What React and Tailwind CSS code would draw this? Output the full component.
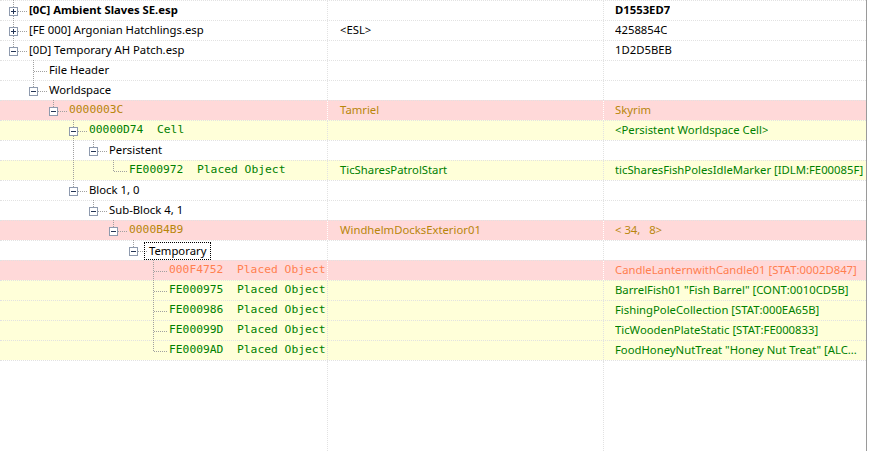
import React from 'react';

const GOLD = 'text-[#b8860b]';
const GREEN = 'text-[#008000]';
const CORAL = 'text-[#ff7f50]';

// g = guide lines for ancestor levels, last = last sibling, box = expander
const rows = [
  { g: [], last: false, box: 'plus', label: '[0C] Ambient Slaves SE.esp', c3: 'D1553ED7', bold: true },
  { g: [], last: false, box: 'plus', label: '[FE 000] Argonian Hatchlings.esp', c2: '<ESL>', c3: '4258854C' },
  { g: [], last: true, box: 'minus', label: '[0D] Temporary AH Patch.esp', c3: '1D2D5BEB' },
  { g: [0], last: false, label: 'File Header' },
  { g: [0], last: true, box: 'minus', label: 'Worldspace' },
  { g: [0, 0], last: true, box: 'minus', label: '0000003C', mono: true, c2: 'Tamriel', c3: 'Skyrim', bg: 'pink', color: GOLD },
  { g: [0, 0, 0], last: false, box: 'minus', label: '00000D74  Cell', mono: true, c3: '<Persistent Worldspace Cell>', bg: 'yellow', color: GREEN },
  { g: [0, 0, 0, 1], last: true, box: 'minus', label: 'Persistent' },
  { g: [0, 0, 0, 1, 0], last: true, label: 'FE000972  Placed Object', mono: true, c2: 'TicSharesPatrolStart', c3: 'ticSharesFishPolesIdleMarker [IDLM:FE00085F]', bg: 'yellow', color: GREEN },
  { g: [0, 0, 0], last: true, box: 'minus', label: 'Block 1, 0' },
  { g: [0, 0, 0, 0], last: true, box: 'minus', label: 'Sub-Block 4, 1' },
  { g: [0, 0, 0, 0, 0], last: true, box: 'minus', label: '0000B4B9', mono: true, c2: 'WindhelmDocksExterior01', c3: '< 34,   8>', bg: 'pink', color: GOLD },
  { g: [0, 0, 0, 0, 0, 0], last: true, box: 'minus', label: 'Temporary', focus: true },
  { g: [0, 0, 0, 0, 0, 0, 0], last: false, label: '000F4752  Placed Object', mono: true, c3: 'CandleLanternwithCandle01 [STAT:0002D847]', bg: 'pink', color: CORAL },
  { g: [0, 0, 0, 0, 0, 0, 0], last: false, label: 'FE000975  Placed Object', mono: true, c3: 'BarrelFish01 "Fish Barrel" [CONT:0010CD5B]', bg: 'yellow', color: GREEN },
  { g: [0, 0, 0, 0, 0, 0, 0], last: false, label: 'FE000986  Placed Object', mono: true, c3: 'FishingPoleCollection [STAT:000EA65B]', bg: 'yellow', color: GREEN },
  { g: [0, 0, 0, 0, 0, 0, 0], last: false, label: 'FE00099D  Placed Object', mono: true, c3: 'TicWoodenPlateStatic [STAT:FE000833]', bg: 'yellow', color: GREEN },
  { g: [0, 0, 0, 0, 0, 0, 0], last: true, label: 'FE0009AD  Placed Object', mono: true, c3: 'FoodHoneyNutTreat "Honey Nut Treat" [ALC...', bg: 'yellow', color: GREEN },
];

const LINE = '#a0a0a0';

const Guide = ({ on }) => (
  <svg width="20" height="20" className="shrink-0 overflow-visible self-start -mt-px">
    {on ? <line x1="10.5" y1="0" x2="10.5" y2="21" stroke={LINE} strokeDasharray="1 1" /> : null}
  </svg>
);

const Connector = ({ last, box }) => (
  <svg width="24" height="20" className="shrink-0 overflow-visible self-start -mt-px">
    <line x1="10.5" y1="0" x2="10.5" y2={last ? 11 : 21} stroke={LINE} strokeDasharray="1 1" />
    <line x1="11" y1="11.5" x2="24" y2="11.5" stroke={LINE} strokeDasharray="1 1" />
    {box && (
      <g>
        <rect x="6.5" y="7.5" width="8" height="8" fill="white" stroke="#8e9aae" />
        <line x1="8" y1="11.5" x2="13" y2="11.5" stroke="#243556" />
        {box === 'plus' && <line x1="10.5" y1="9" x2="10.5" y2="14" stroke="#243556" />}
      </g>
    )}
  </svg>
);

const sans = "font-['Segoe_UI','Noto_Sans',sans-serif] text-[11.3px]";
const mono = "font-['DejaVu_Sans_Mono',monospace] text-[11.3px]";

const Row = ({ r }) => {
  const bg = r.bg === 'pink' ? 'bg-[#ffd9d9]' : r.bg === 'yellow' ? 'bg-[#ffffd9]' : 'bg-white';
  const sep = r.bg === 'pink' ? 'border-white' : 'border-[#e2e2e2]';
  const color = r.color || 'text-black';
  const weight = r.bold ? 'font-bold' : 'font-normal';
  return (
    <div className={`flex h-5 border-t border-dotted border-t-[#e2e2e2] ${bg} ${color} ${weight}`}>
      <div className={`flex w-[328px] shrink-0 items-center pl-[3px] border-r border-dotted ${sep}`}>
        {r.g.map((on, i) => (
          <Guide key={i} on={!!on} />
        ))}
        <Connector last={r.last} box={r.box} />
        {r.focus ? (
          <span className={`${sans} -ml-[3px] border border-dotted border-black px-[4px] leading-[16px]`}>{r.label}</span>
        ) : (
          <span className={`ml-[2px] whitespace-pre ${r.mono ? mono : sans}`}>{r.label}</span>
        )}
      </div>
      <div className={`flex w-[276px] shrink-0 items-center pl-3 border-r border-dotted ${sep} ${sans}`}>
        <span className="whitespace-pre">{r.c2}</span>
      </div>
      <div className={`flex w-[262px] shrink-0 items-center pl-[11px] overflow-hidden ${sans}`}>
        <span className="whitespace-pre truncate">{r.c3}</span>
      </div>
    </div>
  );
};

export default function App() {
  return (
    <div className="w-[875px] h-[451px] bg-white overflow-hidden">
      <div className="flex flex-col w-[867px] h-full border-r border-[#9a9a9a]">
        {rows.map((r, i) => (
          <Row key={i} r={r} />
        ))}
        {/* empty area below the last node */}
        <div className="flex flex-1 border-t border-dotted border-t-[#e2e2e2]">
          <div className="w-[328px] shrink-0 border-r border-dotted border-[#e2e2e2]" />
          <div className="w-[276px] shrink-0 border-r border-dotted border-[#e2e2e2]" />
          <div className="w-[262px] shrink-0" />
        </div>
      </div>
    </div>
  );
}
